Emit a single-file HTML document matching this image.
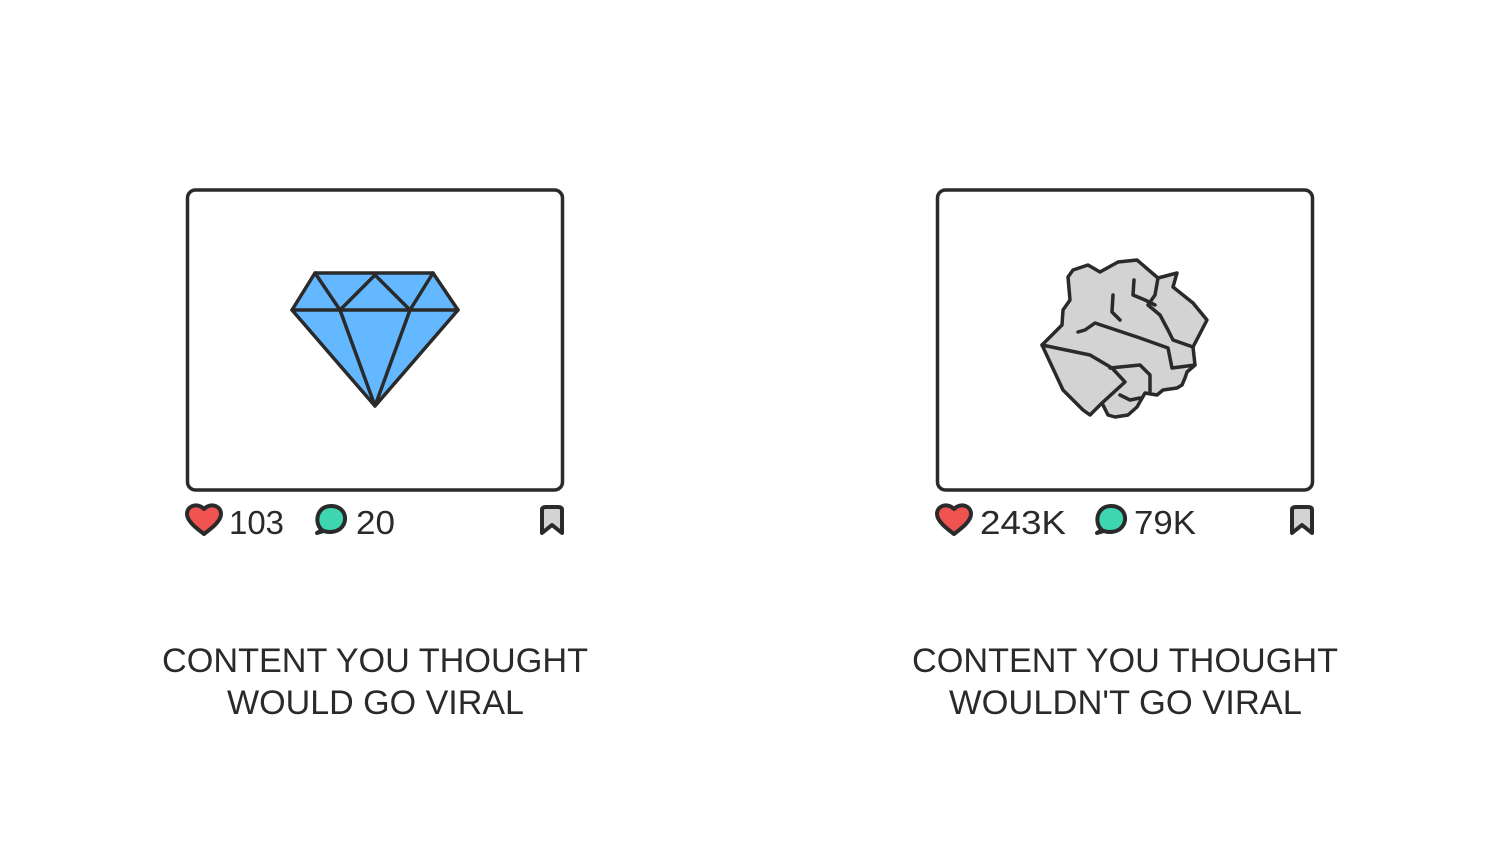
<!DOCTYPE html>
<html><head><meta charset="utf-8"><style>
html,body{margin:0;padding:0;background:#fff;width:1500px;height:844px;overflow:hidden}
</style></head><body>
<svg width="1500" height="844" viewBox="0 0 1500 844" xmlns="http://www.w3.org/2000/svg" font-family="Liberation Sans, sans-serif" fill="#2a2a2a">
<g stroke="#2a2a2a" stroke-width="3.5" stroke-linejoin="round" stroke-linecap="round">
  <rect x="187.5" y="190" width="375" height="300" rx="8" fill="none"/>
  <rect x="937.5" y="190" width="375" height="300" rx="8" fill="none"/>
  <polygon points="315,273 433,273 458,310 375,406 292,310" fill="#63b8ff"/>
  <polyline points="292,310 458,310" fill="none"/>
  <polyline points="315,273 340,310 375,406 410,310 433,273" fill="none"/>
  <polyline points="340,310 375,275 410,310" fill="none"/>
  <polygon fill="#d3d3d3" points="1042,345 1050,337 1062,325 1063,310 1070,300 1068,277 1073,270 1088,265 1100,272 1118,262 1137,260 1158,278 1177,273 1173,287 1193,303 1207,320 1193,347 1195,365 1187,372 1185,378 1182,385 1177,388 1163,390 1157,395 1145,393 1137,407 1128,415 1115,417 1108,415 1102,403 1090,415 1083,410 1063,390"/>
  <g fill="none">
    <polyline points="1042,345 1090,355 1112,368 1125,382 1102,403"/>
    <polyline points="1110,368 1140,365 1150,375 1150,393"/>
    <polyline points="1120,395 1130,400 1140,398"/>
    <polyline points="1078,332 1085,330 1095,323 1140,338 1168,348 1172,368 1195,365"/>
    <polyline points="1113,295 1112,312 1120,320"/>
    <polyline points="1134,280 1133,295 1145,300 1155,305"/>
    <polyline points="1158,278 1155,295 1148,305 1160,315 1168,330 1173,340 1193,347"/>
  </g>
</g>
<g stroke="#2a2a2a" stroke-width="4" stroke-linejoin="round" stroke-linecap="round">
  <path d="M204,534 C196,528 187,521 187,514 C187,506 197,502 204,509 C211,502 221,506 221,514 C221,521 212,528 204,534Z" fill="#ef5350"/>
  <path d="M322,530 C314,524 316,506 331,506 C345,506 349,520 341,528 C337,532 329,533 324,531 L317,533 Z" fill="#3dd6b0"/>
  <path d="M542,510 Q542,507 546,507 L558,507 Q562,507 562,510 L562,533 L552,525 L542,533 Z" fill="#d3d3d3"/>
  <path d="M954,534 C946,528 937,521 937,514 C937,506 947,502 954,509 C961,502 971,506 971,514 C971,521 962,528 954,534Z" fill="#ef5350"/>
  <path d="M1102,530 C1094,524 1096,506 1111,506 C1125,506 1129,520 1121,528 C1117,532 1109,533 1104,531 L1097,533 Z" fill="#3dd6b0"/>
  <path d="M1292,510 Q1292,507 1296,507 L1308,507 Q1312,507 1312,510 L1312,533 L1302,525 L1292,533 Z" fill="#d3d3d3"/>
</g>
<g font-size="33">
  <text x="229" y="534" textLength="55" lengthAdjust="spacingAndGlyphs">103</text>
  <text x="356" y="534" textLength="39" lengthAdjust="spacingAndGlyphs">20</text>
  <text x="980" y="534" textLength="86" lengthAdjust="spacingAndGlyphs">243K</text>
  <text x="1134" y="534" textLength="62" lengthAdjust="spacingAndGlyphs">79K</text>
</g>
<g font-size="34">
  <text x="162" y="672" textLength="426" lengthAdjust="spacingAndGlyphs">CONTENT YOU THOUGHT</text>
  <text x="227" y="714" textLength="297" lengthAdjust="spacingAndGlyphs">WOULD GO VIRAL</text>
  <text x="912" y="672" textLength="426" lengthAdjust="spacingAndGlyphs">CONTENT YOU THOUGHT</text>
  <text x="949" y="714" textLength="353" lengthAdjust="spacingAndGlyphs">WOULDN'T GO VIRAL</text>
</g>
</svg>
</body></html>
